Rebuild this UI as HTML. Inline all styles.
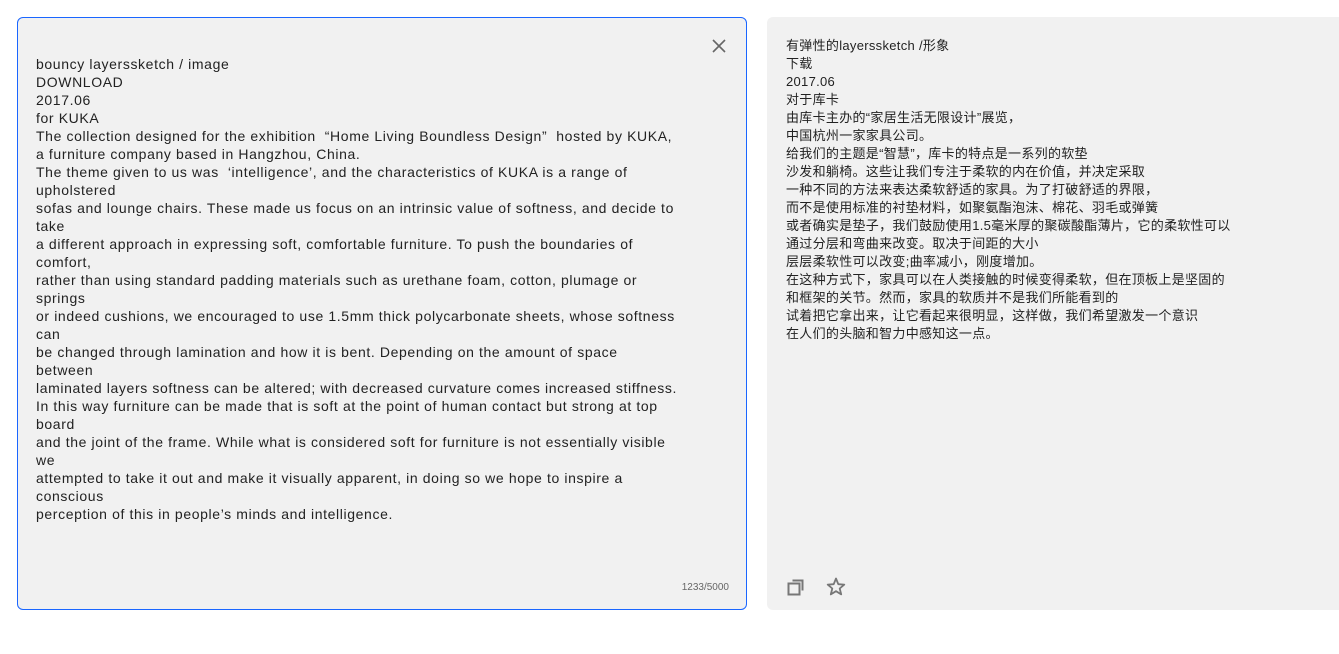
<!DOCTYPE html>
<html><head><meta charset="utf-8"><style>
body{margin:0;width:1339px;height:654px;background:#fff;position:relative;overflow:hidden;font-family:"Liberation Sans","Noto Sans CJK SC",sans-serif;}
.l{position:absolute;left:17px;top:17px;width:728px;height:591px;border:1px solid #1a66ff;border-radius:6px;background:#f1f1f1;}
.r{position:absolute;left:767px;top:17px;width:600px;height:593px;border-radius:6px;background:#f1f1f1;}
.lt{position:absolute;left:18px;top:37px;font-size:14px;line-height:18px;color:#222;white-space:pre;letter-spacing:0.62px;}
.rt{position:absolute;left:19px;top:20px;font-size:13px;line-height:18px;color:#222;white-space:pre;letter-spacing:0.3px;font-family:"Liberation Sans","Noto Sans CJK SC",sans-serif;}
.cnt{position:absolute;right:17px;bottom:16px;font-size:10px;color:#666;}
</style></head><body>
<div class="l">
<svg style="position:absolute;left:694px;top:21px" width="14" height="14"><path d="M1 1L13 13M13 1L1 13" stroke="#666" stroke-width="1.6"/></svg>
<div class="lt">bouncy layerssketch / image
DOWNLOAD
2017.06
for KUKA
The collection designed for the exhibition  “Home Living Boundless Design”  hosted by KUKA,
a furniture company based in Hangzhou, China.
The theme given to us was  ‘intelligence’, and the characteristics of KUKA is a range of
upholstered
sofas and lounge chairs. These made us focus on an intrinsic value of softness, and decide to
take
a different approach in expressing soft, comfortable furniture. To push the boundaries of
comfort,
rather than using standard padding materials such as urethane foam, cotton, plumage or
springs
or indeed cushions, we encouraged to use 1.5mm thick polycarbonate sheets, whose softness
can
be changed through lamination and how it is bent. Depending on the amount of space
between
laminated layers softness can be altered; with decreased curvature comes increased stiffness.
In this way furniture can be made that is soft at the point of human contact but strong at top
board
and the joint of the frame. While what is considered soft for furniture is not essentially visible
we
attempted to take it out and make it visually apparent, in doing so we hope to inspire a
conscious
perception of this in people’s minds and intelligence.</div>
<div class="cnt">1233/5000</div>
</div>
<div class="r">
<div class="rt">有弹性的layerssketch /形象
下载
2017.06
对于库卡
由库卡主办的“家居生活无限设计”展览，
中国杭州一家家具公司。
给我们的主题是“智慧”，库卡的特点是一系列的软垫
沙发和躺椅。这些让我们专注于柔软的内在价值，并决定采取
一种不同的方法来表达柔软舒适的家具。为了打破舒适的界限，
而不是使用标准的衬垫材料，如聚氨酯泡沫、棉花、羽毛或弹簧
或者确实是垫子，我们鼓励使用1.5毫米厚的聚碳酸酯薄片，它的柔软性可以
通过分层和弯曲来改变。取决于间距的大小
层层柔软性可以改变;曲率减小，刚度增加。
在这种方式下，家具可以在人类接触的时候变得柔软，但在顶板上是坚固的
和框架的关节。然而，家具的软质并不是我们所能看到的
试着把它拿出来，让它看起来很明显，这样做，我们希望激发一个意识
在人们的头脑和智力中感知这一点。</div>
<svg style="position:absolute;left:20px;top:561px" width="18" height="18"><rect x="1.5" y="5.5" width="11" height="11" fill="none" stroke="#777" stroke-width="2"/><path d="M5.5 2.5H15.5V12.5" fill="none" stroke="#777" stroke-width="2"/></svg>
<svg style="position:absolute;left:59px;top:560px" width="20" height="20"><path d="M10 1.5L12.3 7.2L18.3 7.6L13.7 11.5L15.2 17.4L10 14.2L4.8 17.4L6.3 11.5L1.7 7.6L7.7 7.2Z" fill="none" stroke="#777" stroke-width="1.8" stroke-linejoin="round"/></svg>
</div>
</body></html>
